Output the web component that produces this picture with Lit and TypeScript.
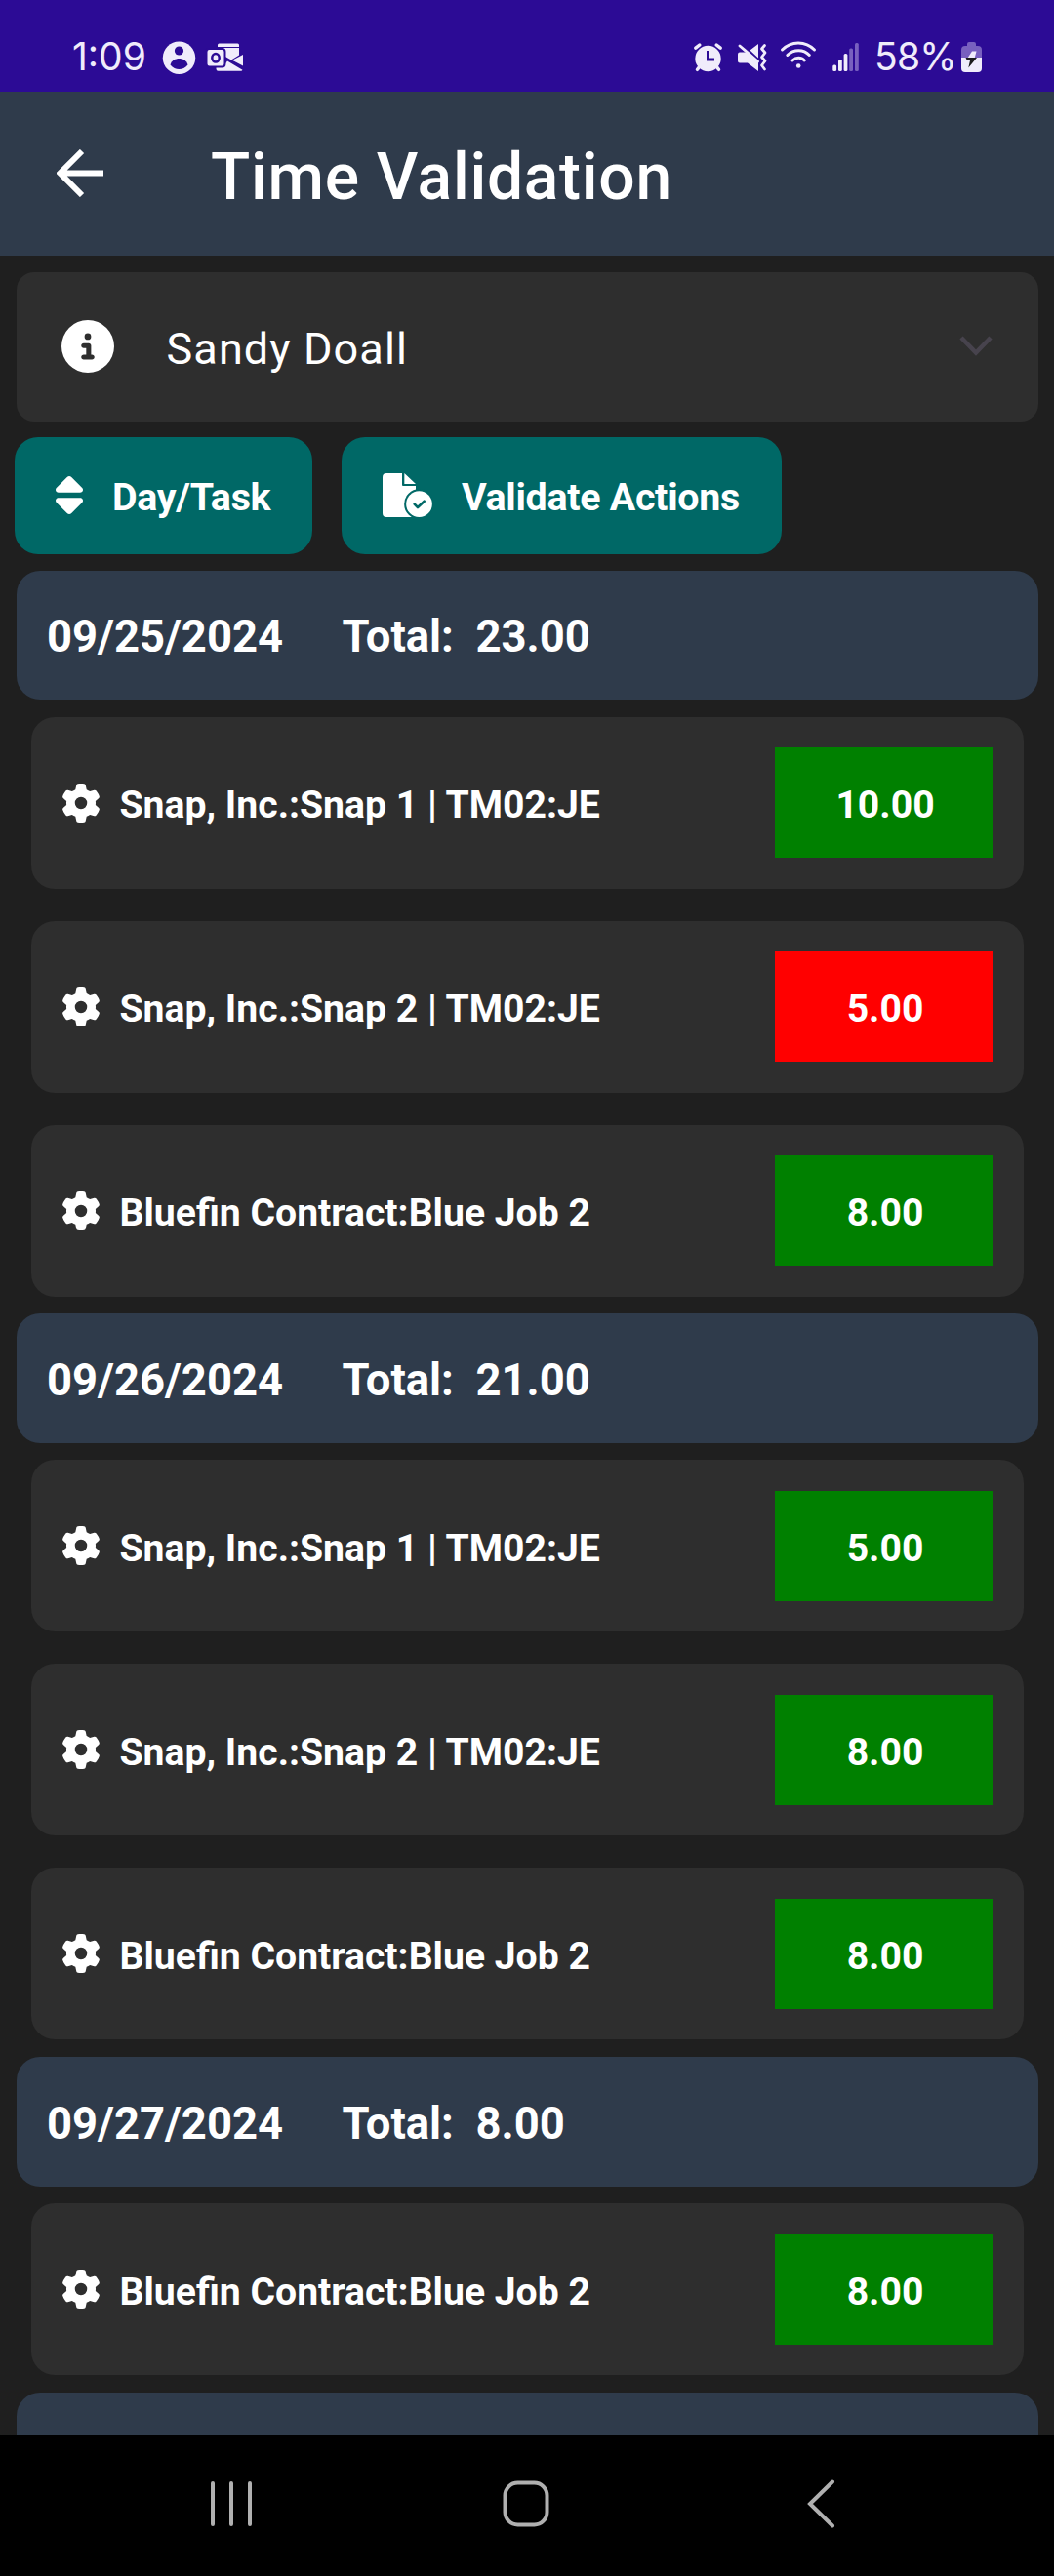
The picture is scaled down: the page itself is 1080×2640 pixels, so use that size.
import { LitElement, html, css } from "lit";
import { customElement, property } from "lit/decorators.js";

interface Entry { job: string; hours: string; tone: "ok" | "bad"; }
interface Day { date: string; total: string; entries: Entry[]; }

const snap1 = "Snap, Inc.:Snap 1 | TM02:JE";
const snap2 = "Snap, Inc.:Snap 2 | TM02:JE";
const bluefin = "Bluefin Contract:Blue Job 2";

const days: Day[] = [
  { date: "09/25/2024", total: "23.00", entries: [
    { job: snap1, hours: "10.00", tone: "ok" },
    { job: snap2, hours: "5.00", tone: "bad" },
    { job: bluefin, hours: "8.00", tone: "ok" } ] },
  { date: "09/26/2024", total: "21.00", entries: [
    { job: snap1, hours: "5.00", tone: "ok" },
    { job: snap2, hours: "8.00", tone: "ok" },
    { job: bluefin, hours: "8.00", tone: "ok" } ] },
  { date: "09/27/2024", total: "8.00", entries: [
    { job: bluefin, hours: "8.00", tone: "ok" } ] },
];

const glyphs = {
  info: "M256 512A256 256 0 1 0 256 0a256 256 0 1 0 0 512zM216 336h24V272H216c-13.3 0-24-10.7-24-24s10.7-24 24-24h48c13.3 0 24 10.7 24 24v88h8c13.3 0 24 10.7 24 24s-10.7 24-24 24H216c-13.3 0-24-10.7-24-24s10.7-24 24-24zm40-208a32 32 0 1 1 0 64 32 32 0 1 1 0-64z",
  sort: "M137.4 41.4c12.5-12.5 32.8-12.5 45.3 0l128 128c9.2 9.2 11.9 22.9 6.9 34.9s-16.6 19.8-29.6 19.8H32c-12.9 0-24.6-7.8-29.6-19.8s-2.2-25.7 6.9-34.9l128-128zm0 429.3l-128-128c-9.2-9.2-11.9-22.9-6.9-34.9s16.6-19.8 29.6-19.8H288c12.9 0 24.6 7.8 29.6 19.8s2.2 25.7-6.9 34.9l-128 128c-12.5 12.5-32.8 12.5-45.3 0z",
  gear: "M495.9 166.6c3.2 8.7 .5 18.4-6.4 24.6l-43.3 39.4c1.1 8.3 1.7 16.8 1.7 25.4s-.6 17.1-1.7 25.4l43.3 39.4c6.9 6.2 9.6 15.9 6.4 24.6c-4.4 11.9-9.7 23.3-15.8 34.3l-4.7 8.1c-6.6 11-14 21.4-22.1 31.2c-5.9 7.2-15.7 9.6-24.5 6.8l-55.7-17.7c-13.4 10.3-28.2 18.9-44 25.4l-12.5 57.1c-2 9.1-9 16.3-18.2 17.8c-13.8 2.3-28 3.5-42.5 3.5s-28.7-1.2-42.5-3.5c-9.2-1.5-16.2-8.7-18.2-17.8l-12.5-57.1c-15.8-6.5-30.6-15.1-44-25.4L83.1 425.9c-8.8 2.8-18.6 .3-24.5-6.8c-8.1-9.8-15.5-20.2-22.1-31.2l-4.7-8.1c-6.1-11-11.4-22.4-15.8-34.3c-3.2-8.7-.5-18.4 6.4-24.6l43.3-39.4C64.6 273.1 64 264.6 64 256s.6-17.1 1.7-25.4L22.4 191.2c-6.9-6.2-9.6-15.9-6.4-24.6c4.4-11.9 9.7-23.3 15.8-34.3l4.7-8.1c6.6-11 14-21.4 22.1-31.2c5.9-7.2 15.7-9.6 24.5-6.8l55.7 17.7c13.4-10.3 28.2-18.9 44-25.4l12.5-57.1c2-9.1 9-16.3 18.2-17.8C227.3 1.2 241.5 0 256 0s28.7 1.2 42.5 3.5c9.2 1.5 16.2 8.7 18.2 17.8l12.5 57.1c15.8 6.5 30.6 15.1 44 25.4l55.7-17.7c8.8-2.8 18.6-.3 24.5 6.8c8.1 9.8 15.5 20.2 22.1 31.2l4.7 8.1c6.1 11 11.4 22.4 15.8 34.3zM256 336a80 80 0 1 0 0-160 80 80 0 1 0 0 160z",
};

/* Android status bar: clock and notifications left, device state right. */
@customElement("status-bar")
class StatusBar extends LitElement {
  static styles = css`
    :host { display: flex; height: 94px; box-sizing: border-box; padding-top: 34px; background: #2c0b95; color: #f0ecfb;
      font: 400 39px/48px Inter, Roboto, sans-serif; }
    .left { display: flex; padding-left: 74px; }
    .right { display: flex; margin-left: auto; padding-right: 72px; }
    .clock { width: 91px; }
    .pct { width: 88px; letter-spacing: -0.8px; }
    svg { display: block; height: 48px; fill: none; }
    .f { fill: #f0ecfb; }
    .s { stroke: #f0ecfb; }
    .cut { stroke: #2c0b95; }
    .hole { fill: #2c0b95; }
    .dim { fill: #7860bf; }
    .bolt { fill: #1c1c1c; }
  `;
  render() {
    return html`
      <div class="left">
        <span class="clock">1:09</span>
        <svg width="90" viewBox="165 34 90 48">
          <circle class="f" cx="183.5" cy="59.3" r="16.7"/>
          <circle class="hole" cx="183.5" cy="52" r="4.6"/>
          <path class="hole" d="M174.5 66.5c1-4.500 5.500-6.500 9-6.500s8 2 9 6.500c-2.500 3-5.800 4.500-9 4.500s-6.500-1.500-9-4.500z"/>
          <path class="f" d="M224.500 44.500h19a1.500 1.500 0 0 1 1.500 1.500v10.500l-8 5-14-8v-7.500a1.500 1.500 0 0 1 1.500-1.500z"/>
          <path class="cut" stroke-width="1" d="M223 48.500h22"/>
          <path class="f" d="M249 56v11.500l-11-5.700zM221.500 69v-2.500h8.500l3-4 15.500 9.300-1 .9h-24a2 2 0 0 1-2-2z"/>
          <rect class="f cut" stroke-width="2" x="211.500" y="50" width="19" height="18.500" rx="3"/>
          <ellipse class="cut" stroke-width="2.500" cx="221" cy="59.300" rx="3.700" ry="4.300"/>
        </svg>
      </div>
      <div class="right">
        <svg width="186" viewBox="710 34 186 48">
          <circle class="f" cx="725.500" cy="60" r="13.200"/>
          <path class="s" stroke-width="3.500" stroke-linecap="round" d="M712.800 49.200l4-3.200M738.200 49.200l-4-3.200M717 68l-2.500 3.300M734 68l2.500 3.300"/>
          <path class="cut" stroke-width="3" d="M725.500 52v9h6.500"/>
          <path class="f" d="M758 53.500h7L777 64v9l-11-8.500h-8a2 2 0 0 1-2-2v-7a2 2 0 0 1 2-2zM777 45v14.500l-8.500-8z"/>
          <path class="s" stroke-width="2.800" stroke-linecap="round" d="M758 47l18.500 16"/>
          <path class="s" stroke-width="2.800" stroke-linecap="round" stroke-linejoin="round" d="M783.500 46.500l-3 3.500 3.500 4-3.500 4.500 3.500 4-3.500 4.500 3 4"/>
          <path class="s" stroke-width="3" stroke-linecap="round" d="M801.500 51c9-9.500 24-9.500 33 0M806.800 56.500c6.500-6.500 16.500-6.500 22.500 0M812 62c3.800-3.800 8.800-3.800 12.300 0"/>
          <circle class="f" cx="818.200" cy="67.500" r="2.300"/>
          <rect class="f" x="853.300" y="66.500" width="3.800" height="6.500" rx="1.500"/>
          <rect class="f" x="859" y="61" width="3.800" height="12" rx="1.500"/>
          <rect class="f" x="864.600" y="55" width="3.800" height="18" rx="1.500"/>
          <rect class="dim" x="870.200" y="49.500" width="3.800" height="23.500" rx="1.500"/>
          <rect class="dim" x="876" y="44" width="3.800" height="29" rx="1.500"/>
        </svg>
        <span class="pct">58%</span>
        <svg width="24" viewBox="984 34 24 48">
          <path class="dim" d="M985 59V51a4 4 0 0 1 4-4h2v-2a2 2 0 0 1 2-2h5a2 2 0 0 1 2 2v2h2a4 4 0 0 1 4 4v8z"/>
          <path class="f" d="M985 59h21v11a4 4 0 0 1-4 4h-13a4 4 0 0 1-4-4z"/>
          <path class="f" d="M996 52.500h4.500L998.800 59h-7z"/>
          <path class="bolt" d="M989.500 59h11.500l-8.700 10.500 1.700-7.500h-3z"/>
        </svg>
      </div>`;
  }
}

/* One job line with its coloured hours cell. */
@customElement("time-entry")
class TimeEntry extends LitElement {
  @property({ attribute: false }) entry!: Entry;
  static styles = css`
    :host { display: flex; align-items: center; box-sizing: border-box; height: 176px; padding: 0 31.5px 0 31px;
      border-radius: 24px; background: #2e2e2e; color: #fff; font: 700 39.15px/48px Roboto, sans-serif; }
    .gear { flex: none; width: 40px; height: 40px; fill: #fff; }
    .job { flex: 1; margin: 5px 0 0 20px; white-space: nowrap; }
    .hours { width: 223px; height: 113px; padding: 5px 0 0 3px; box-sizing: border-box; display: flex; align-items: center; justify-content: center; }
    .ok { background: #008000; }
    .bad { background: #ff0000; }
  `;
  render() {
    return html`
      <svg class="gear" viewBox="0 0 512 512"><path d=${glyphs.gear}/></svg>
      <span class="job">${this.entry.job}</span>
      <span class="hours ${this.entry.tone}">${this.entry.hours}</span>`;
  }
}

@customElement("app-root")
class AppRoot extends LitElement {
  static styles = css`
    :host { display: flex; flex-direction: column; width: 1080px; height: 2640px; overflow: hidden;
      background: #1f1f1f; color: #fff; font-family: Roboto, sans-serif; }
    status-bar, .appbar, .nav { flex: none; }
    .appbar { display: flex; align-items: center; height: 168px; padding-left: 58px; box-sizing: border-box; background: #2f3b4b; }
    .back { width: 49px; height: 49px; margin-top: -2px; }
    .title { margin: 7px 0 0 109px; font: 500 66px/80px Roboto, sans-serif; letter-spacing: 0.7px; }
    .content { flex: 1; min-height: 0; overflow: hidden; padding: 16.5px 16.5px 0; }
    .picker { display: flex; align-items: center; box-sizing: border-box; height: 153px; padding: 0 47px 0 46px;
      border-radius: 18px; background: #2e2e2e; }
    .info { width: 54px; height: 54px; fill: #fff; }
    .who { flex: 1; margin: 5px 0 0 54px; font-size: 45px; line-height: 56px; letter-spacing: 1.1px; }
    .chevron { width: 34px; height: 21px; margin-top: -1px; }
    .actions { display: flex; gap: 30px; margin: 16.5px 0 16.5px -1.5px; }
    .btn { display: flex; align-items: center; box-sizing: border-box; height: 120px; border-radius: 24px; background: #006866; color: #fff;
      font: 700 39.4px/48px Roboto, sans-serif; letter-spacing: -0.3px; white-space: nowrap; }
    .btn svg { height: 45px; fill: #fff; margin-top: -1px; }
    .sortby { width: 305px; padding-left: 42px; }
    .sortby svg { width: 28px; margin-right: 30px; }
    .validate { width: 451px; padding-left: 42px; }
    .validate svg { width: 51px; margin-right: 30px; }
    .validate .gap { fill: #006866; }
    .tick { fill: none; stroke: #006866; stroke-width: 8; stroke-linecap: round; stroke-linejoin: round; }
    .btn span { margin-top: 4px; }
    .day { display: flex; align-items: center; box-sizing: border-box; height: 132.3px; padding: 4.5px 0 0 31.5px; border-radius: 24px;
      background: #2f3b4b; font-size: 45.4px; line-height: 56px; font-weight: 700; white-space: pre; }
    .date { width: 302.5px; }
    .entries { display: flex; flex-direction: column; gap: 33px; padding: 17.8px 15px; }
    .nav { display: flex; align-items: center; height: 144px; padding: 0 0 4px 214px; box-sizing: border-box; background: #000; }
    .nav svg { fill: none; stroke: #b0b0b0; stroke-width: 4; stroke-linecap: round; }
    .home { margin: 0 264px 0 255px; }
  `;
  render() {
    return html`
      <status-bar></status-bar>
      <header class="appbar">
        <svg class="back" viewBox="0 0 49 49" fill="none" stroke="#fff" stroke-width="6"><path d="M48 24.500H4M26 2L3.600 24.500 26 47"/></svg>
        <div class="title">Time Validation</div>
      </header>
      <main class="content">
        <div class="picker">
          <svg class="info" viewBox="0 0 512 512"><path d=${glyphs.info}/></svg>
          <span class="who">Sandy Doall</span>
          <svg class="chevron" viewBox="0 0 34 21" fill="none" stroke="#47434d" stroke-width="4.5"><path d="M2 2l15 15.500L32 2"/></svg>
        </div>
        <div class="actions">
          <div class="btn sortby"><svg viewBox="0 0 320 512"><path d=${glyphs.sort}/></svg><span>Day/Task</span></div>
          <div class="btn validate">
            <svg viewBox="0 0 153 135">
              <path d="M12 0H60V36q0 3 3 3H102V135H12Q0 135 0 123V12Q0 0 12 0zM67 0L102 33H67z"/>
              <circle class="gap" cx="112.5" cy="95" r="46"/>
              <circle cx="112.5" cy="95" r="40"/>
              <path class="tick" d="M98 95l10 10 20-19"/>
            </svg>
            <span>Validate Actions</span>
          </div>
        </div>
        ${days.map((day) => html`
          <div class="day"><span class="date">${day.date}</span><span>Total:  ${day.total}</span></div>
          <div class="entries">${day.entries.map((e) => html`<time-entry .entry=${e}></time-entry>`)}</div>`)}
        <div class="day"></div>
      </main>
      <nav class="nav">
        <svg width="46" height="52" viewBox="0 0 46 52"><path d="M4 5v42M23 5v42M42 5v42"/></svg>
        <svg class="home" width="48" height="48" viewBox="0 0 48 48"><rect x="2.500" y="2.500" width="43" height="43" rx="13"/></svg>
        <svg width="30" height="50" viewBox="0 0 30 50"><path d="M26 2.500L3 25l23 22.500"/></svg>
      </nav>`;
  }
}
